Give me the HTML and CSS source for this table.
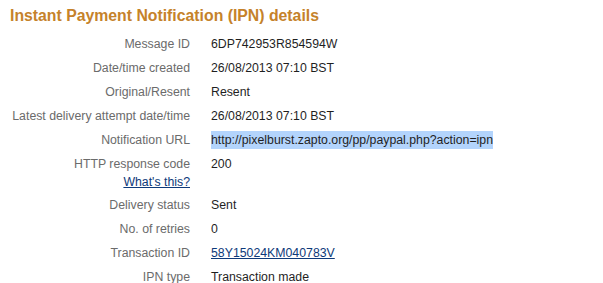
FILE: index.html
```html
<!DOCTYPE html>
<html>
  <head>
    <meta charset="utf-8">
    <title>IPN details</title>
    <link rel="stylesheet" href="styles.css">
  </head>
  <body>
    <h2 class="title">Instant Payment Notification (IPN) details</h2>
    <div class="details">
      <div class="label">Message ID</div>
      <div class="value">6DP742953R854594W</div>

      <div class="label">Date/time created</div>
      <div class="value">26/08/2013 07:10 BST</div>

      <div class="label">Original/Resent</div>
      <div class="value">Resent</div>

      <div class="label">Latest delivery attempt date/time</div>
      <div class="value">26/08/2013 07:10 BST</div>

      <div class="label">Notification URL</div>
      <div class="value"><span class="selected">http://pixelburst.zapto.org/pp/paypal.php?action=ipn</span></div>

      <div class="label">HTTP response code<a class="help" href="#">What's this?</a></div>
      <div class="value">200</div>

      <div class="label">Delivery status</div>
      <div class="value">Sent</div>

      <div class="label">No. of retries</div>
      <div class="value">0</div>

      <div class="label">Transaction ID</div>
      <div class="value"><a href="#">58Y15024KM040783V</a></div>

      <div class="label">IPN type</div>
      <div class="value">Transaction made</div>
    </div>
  </body>
</html>
```

FILE: styles.css
```css
body {
  margin: 0;
  padding: 0 10px;
  background: #fff;
  font-family: "Liberation Sans", Arial, sans-serif;
  font-size: 12.3px;
  color: #222;
}
.title {
  margin: 5px 0 5px;
  font-size: 15.8px;
  line-height: 22px;
  font-weight: bold;
  color: #c5822a;
}
.details {
  display: grid;
  grid-template-columns: 180px 1fr;
  column-gap: 21px;
}
.label {
  text-align: right;
  white-space: nowrap;
  color: #6b6b6b;
  line-height: 24px;
}
.value {
  line-height: 24px;
  color: #1f1f1f;
}
/* help link sits tight under its label */
.label .help {
  display: block;
  line-height: 14px;
  margin: -1px 0 4px;
}
a {
  color: #0e3a7a;
  text-decoration: underline;
}
.selected {
  background: #b3d4fc;
  padding: 2px 0;
}
```
